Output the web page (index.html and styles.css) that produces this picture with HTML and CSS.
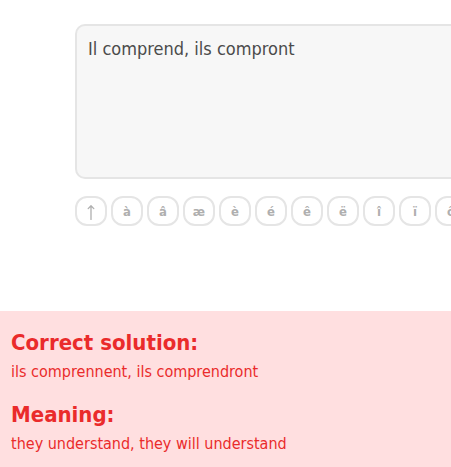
FILE: index.html
```html
<!DOCTYPE html>
<html>
<head>
<meta charset="utf-8">
<link rel="stylesheet" href="styles.css">
</head>
<body>
<div class="page">
  <div class="answer">
    <div class="textbox">Il comprend, ils compront</div>
    <div class="keys">
      <span class="key"><svg class="arrow" width="10" height="16" viewBox="0 0 10 16"><path d="M5 15.5V1.8M2.2 4.6L5 1.8L7.8 4.6" fill="none" stroke="#afafaf" stroke-width="1.3" stroke-linecap="round" stroke-linejoin="round"/></svg></span>
      <span class="key">à</span>
      <span class="key">â</span>
      <span class="key">æ</span>
      <span class="key">è</span>
      <span class="key">é</span>
      <span class="key">ê</span>
      <span class="key">ë</span>
      <span class="key">î</span>
      <span class="key">ï</span>
      <span class="key">ô</span>
    </div>
  </div>
  <div class="feedback">
    <h2 class="fb-title">Correct solution:</h2>
    <p class="fb-text">ils comprennent, ils comprendront</p>
    <h2 class="fb-title fb-second">Meaning:</h2>
    <p class="fb-text">they understand, they will understand</p>
  </div>
</div>
</body>
</html>
```
FILE: styles.css
```css
html, body {
  margin: 0;
  padding: 0;
  background: #ffffff;
  overflow: hidden;
}
.page {
  width: 451px;
  height: 467px;
  font-family: "DejaVu Sans Condensed", "DejaVu Sans", sans-serif;
  overflow: hidden;
}
.answer {
  padding: 24px 0 0 75px;
  height: 311px;
  box-sizing: border-box;
  overflow: hidden;
}
.textbox {
  width: 420px;
  height: 155px;
  box-sizing: border-box;
  border: 2px solid #e5e5e5;
  border-radius: 10px;
  background: #f7f7f7;
  color: #4b4b4b;
  font-size: 18px;
  padding: 10px 11px;
  line-height: 26px;
}
.keys {
  display: flex;
  gap: 4px;
  margin-top: 17px;
  white-space: nowrap;
  overflow: hidden;
  width: 376px;
}
.key {
  flex: 0 0 auto;
  width: 32px;
  height: 30px;
  box-sizing: border-box;
  border: 2px solid #e5e5e5;
  border-radius: 12px;
  color: #afafaf;
  font-weight: bold;
  font-size: 13px;
  display: flex;
  align-items: center;
  justify-content: center;
}
.arrow {
  display: block;
  margin-top: 2px;
}
.feedback {
  background: #ffdfe0;
  height: 156px;
  padding: 18px 11px 0;
  box-sizing: border-box;
  color: #ea2b2b;
}
.fb-title {
  margin: 0;
  font-size: 22px;
  line-height: 28px;
  font-weight: bold;
}
.fb-second {
  margin-top: 18px;
}
.fb-text {
  margin: 4px 0 0;
  font-size: 16px;
  line-height: 22px;
}
```
